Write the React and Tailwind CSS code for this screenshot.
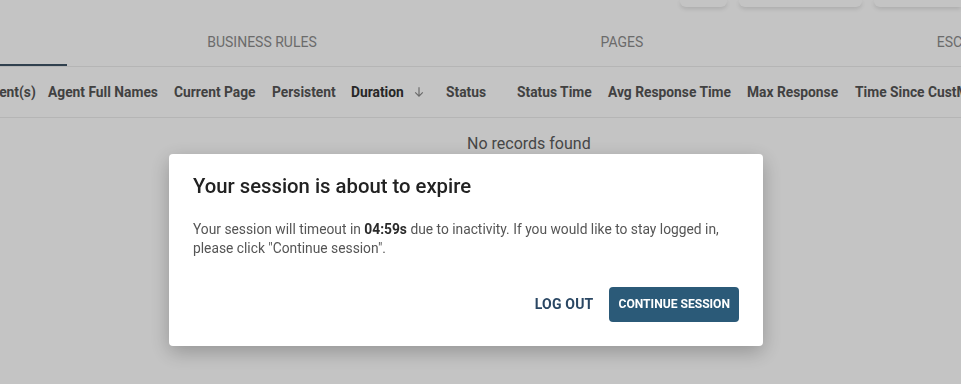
import React from "react";

const columns = [
  { key: "agents", label: "Agent(s)", w: "w-[66px]" },
  { key: "names", label: "Agent Full Names", w: "w-[126px]" },
  { key: "page", label: "Current Page", w: "w-[98px]" },
  { key: "persistent", label: "Persistent", w: "w-[79px]" },
  { key: "duration", label: "Duration", w: "w-[95px]", sorted: true },
  { key: "status", label: "Status", w: "w-[71px]" },
  { key: "statusTime", label: "Status Time", w: "w-[91px]" },
  { key: "avg", label: "Avg Response Time", w: "w-[139px]" },
  { key: "max", label: "Max Response", w: "w-[108px]" },
  { key: "since", label: "Time Since CustMsg", w: "w-[170px]" },
];

const tabs = ["MONITORING", "BUSINESS RULES", "PAGES", "ESCALATIONS"];

function ArrowDown() {
  return (
    <svg width="14" height="14" viewBox="0 0 24 24" className="ml-2 text-[#8a8a8a]">
      <path d="M12 4v15M5.5 12.5 12 19l6.5-6.5" fill="none" stroke="currentColor" strokeWidth="2" />
    </svg>
  );
}

function TopActions() {
  return (
    <div className="flex justify-end gap-3 h-[7px]">
      <div className="w-[47px] bg-white rounded-b-md shadow-[0_2px_4px_rgba(0,0,0,0.12)]" />
      <div className="w-[123px] bg-white rounded-b-md shadow-[0_2px_4px_rgba(0,0,0,0.12)]" />
      <div className="w-[87px] bg-white rounded-bl-md shadow-[0_2px_4px_rgba(0,0,0,0.12)]" />
    </div>
  );
}

function TabBar() {
  return (
    <div className="mt-[11px] h-[49px] border-b border-[#ececec] overflow-hidden">
      <div className="flex -ml-[278px] h-full">
        {tabs.map((t, i) => (
          <div key={t} className="relative w-[360px] shrink-0 flex items-center justify-center text-[14px] text-[#8c8c8c]">
            {t}
            {i === 0 ? <div className="absolute left-0 bottom-0 w-[345px] h-[2px] bg-[#3f5466]" /> : null}
          </div>
        ))}
      </div>
    </div>
  );
}

function SessionModal() {
  return (
    <div className="fixed inset-0 bg-black/[0.23] pl-[169px] pt-[154px]">
      <div className="w-[594px] bg-white rounded-[4px] shadow-[0_6px_20px_rgba(0,0,0,0.25)] px-6 pt-[18px] pb-6">
        <h2 className="text-[20.3px] leading-[28px] font-medium text-[#222]">Your session is about to expire</h2>
        <p className="mt-5 text-[13.8px] leading-[19px] text-[#555]">
          Your session will timeout in <span className="font-bold text-[#2a2a2a]">04:59s</span> due to inactivity. If you would like to stay logged in,
          <br />
          please click "Continue session".
        </p>
        <div className="mt-[29px] flex justify-end items-center gap-2">
          <button type="button" className="h-[35px] px-2 text-[14px] font-bold text-[#2a4763] uppercase tracking-[0.2px]">Log out</button>
          <button type="button" className="h-[35px] px-[9px] rounded-[4px] bg-[#2b5a78] text-white text-[12.1px] font-bold uppercase">
            Continue session
          </button>
        </div>
      </div>
    </div>
  );
}

export default function App() {
  return (
    <div className="w-[961px] h-[384px] overflow-hidden bg-white font-['Roboto',sans-serif] relative">
      <TopActions />
      <TabBar />
      <div className="h-[51px] border-b border-[#ececec] overflow-hidden">
        <div className="flex h-full items-center -ml-[26px]">
          {columns.map((c) => (
            <div key={c.key} className={`${c.w} shrink-0 px-2 flex items-center whitespace-nowrap text-[13.8px] font-bold ${c.sorted ? "text-[#333]" : "text-[#555]"}`}>
              {c.label}
              {c.sorted ? <ArrowDown /> : null}
            </div>
          ))}
        </div>
      </div>
      <div className="pt-4 pl-[467px] text-[16px] leading-5 text-[#5c5c5c] whitespace-nowrap">No records found</div>
      <SessionModal />
    </div>
  );
}
